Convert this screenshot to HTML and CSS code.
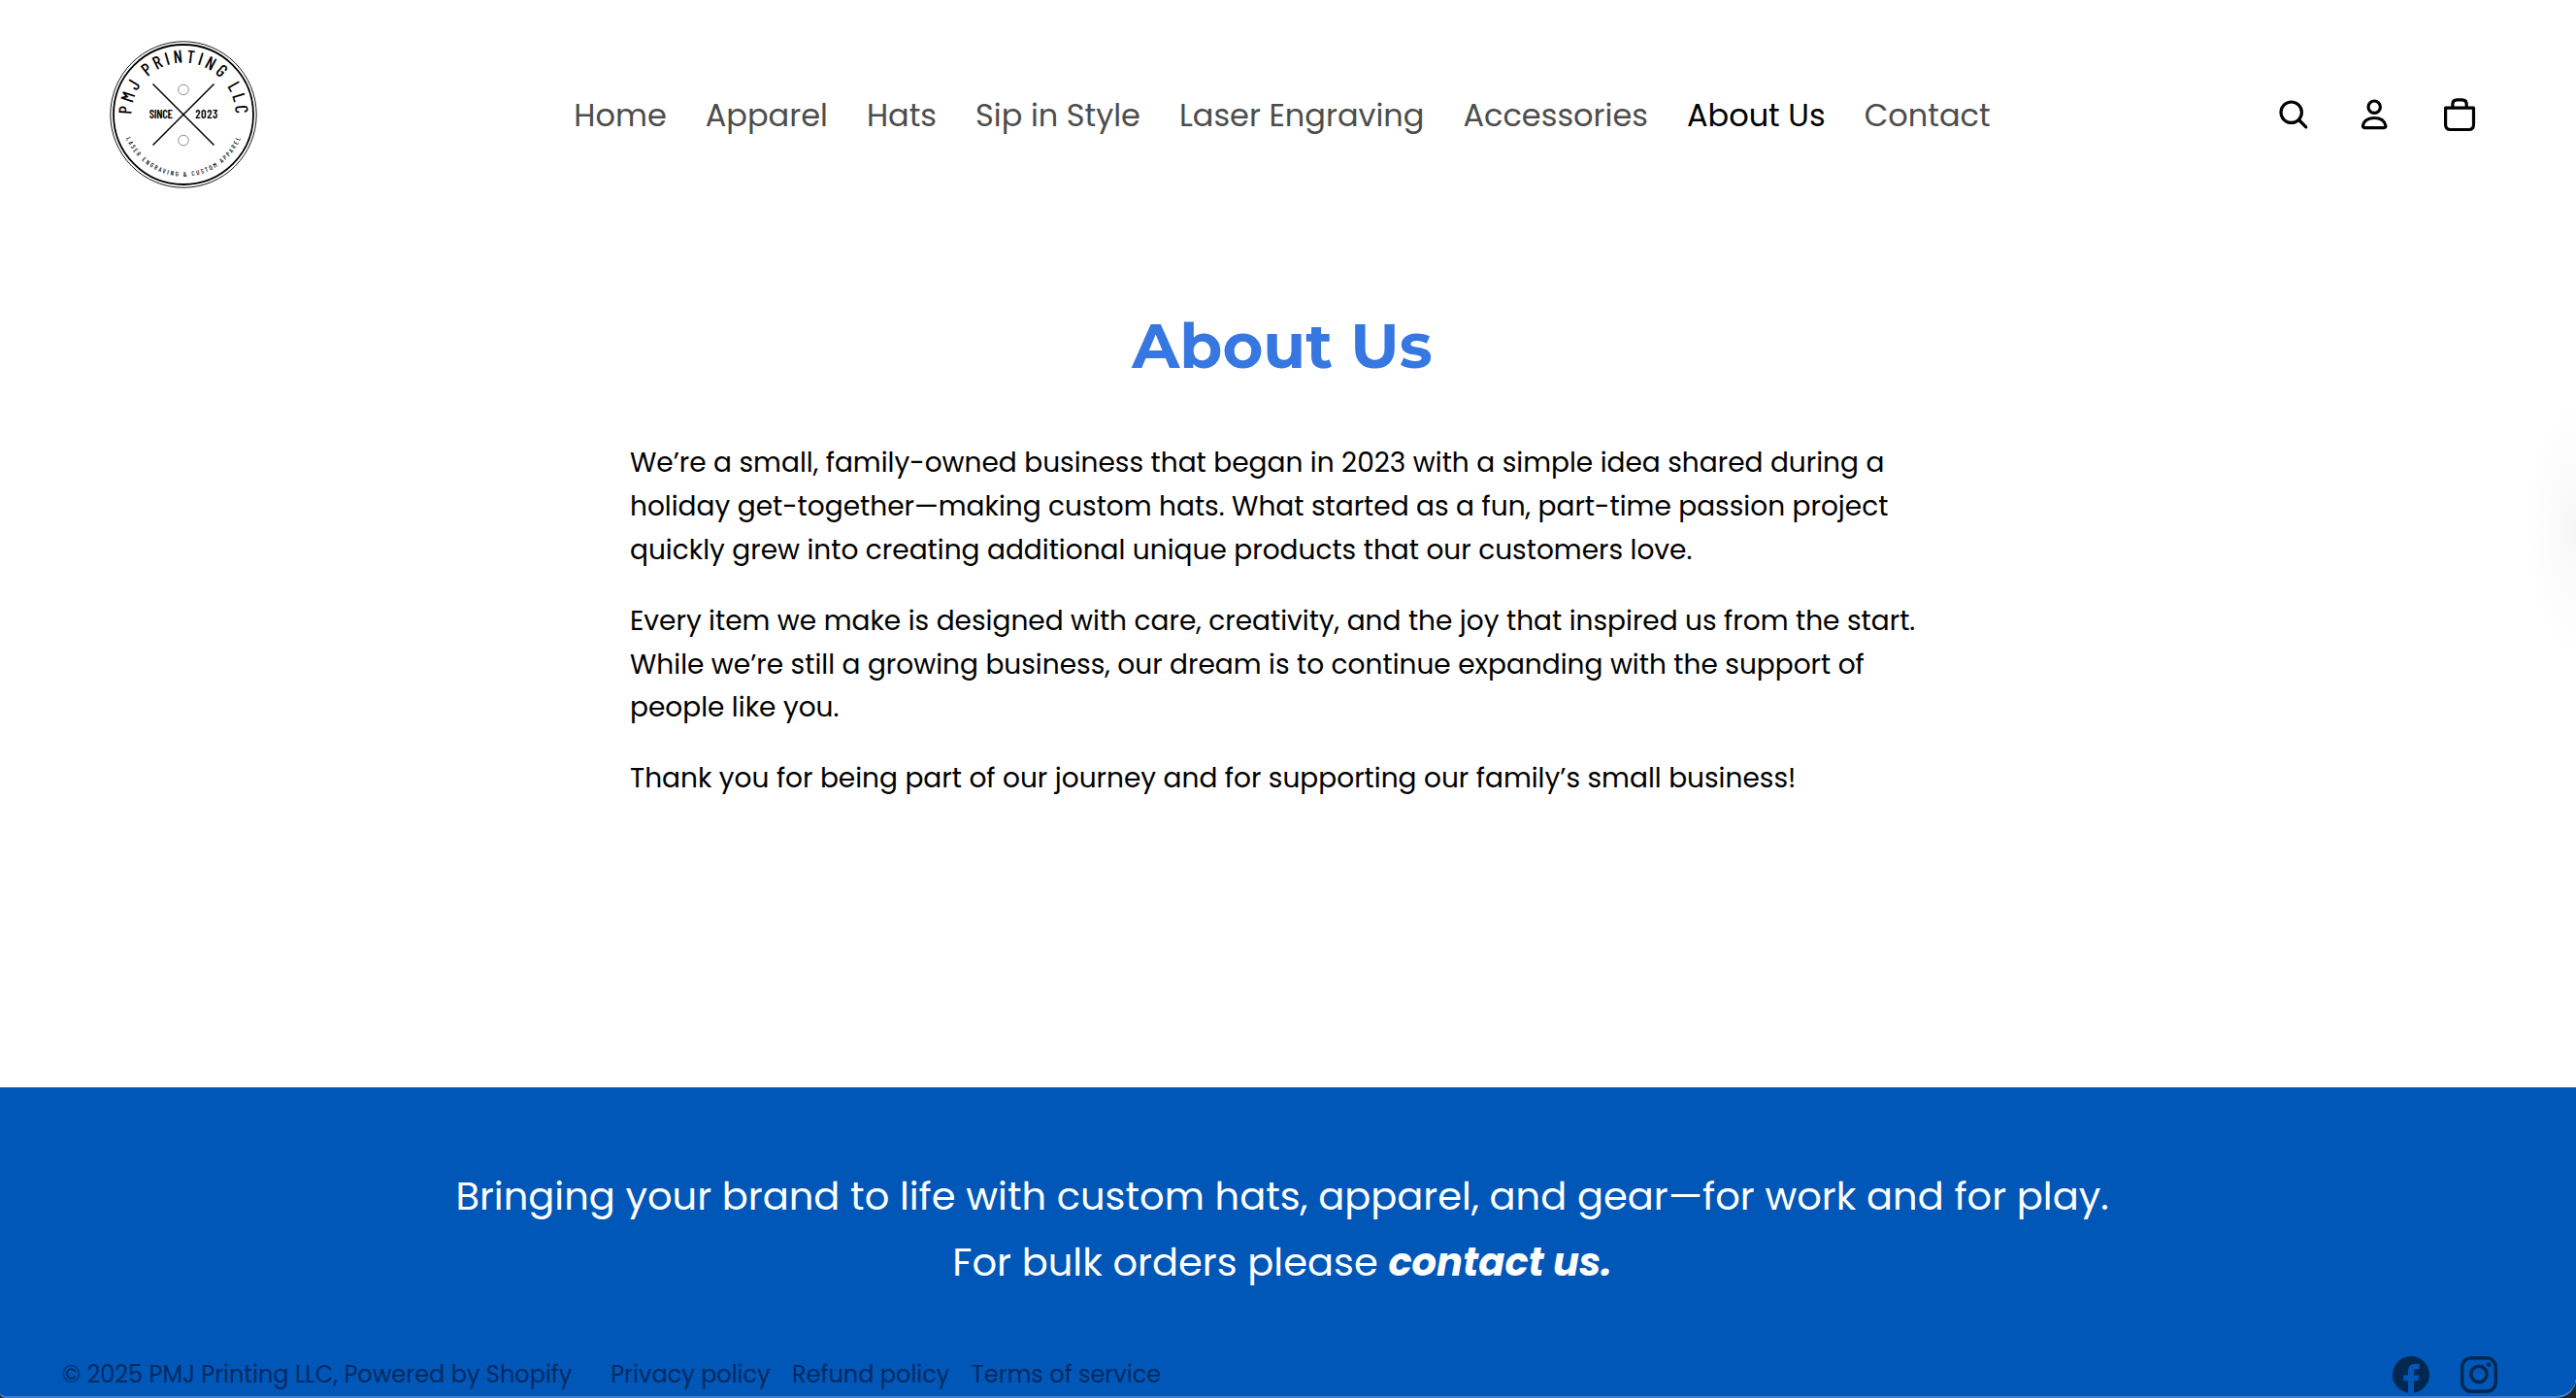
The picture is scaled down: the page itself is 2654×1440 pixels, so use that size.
FILE: index.html
```html
<!DOCTYPE html>
<html lang="en">
<head>
<meta charset="utf-8">
<title>About Us – PMJ Printing LLC</title>
<link rel="stylesheet" href="styles.css">
</head>
<body>
<div class="window">
  <header class="header">
    <a class="logo" aria-label="PMJ Printing LLC">
      <svg width="160" height="160" viewBox="-80 -80 160 160" fill="none" stroke="#000">
        <defs>
          <path id="arc-top" d="M-53.5 0A53.5 53.5 0 0 1 53.5 0"/>
          <path id="arc-bottom" d="M-59 24.500A63.900 63.900 0 0 0 59 24.500"/>
        </defs>
        <circle r="75.2" stroke-width=".9"/>
        <circle r="72" stroke-width="1.8"/>
        <path d="M-31.5-31.5l63 63M31.5-31.5l-63 63" stroke-width="1.5"/>
        <circle cy="-25.6" r="5.3" stroke="#444" stroke-width=".6"/>
        <circle cy="26.6" r="5.3" stroke="#444" stroke-width=".6"/>
        <g class="logo-text">
          <text class="logo-name" textLength="167"><textPath href="#arc-top" textLength="167">PMJ PRINTING LLC</textPath></text>
          <text class="logo-tag" textLength="150"><textPath href="#arc-bottom" textLength="150">LASER ENGRAVING &amp; CUSTOM APPAREL</textPath></text>
          <text class="logo-year" x="-35.2" y="4" textLength="24">SINCE</text>
          <text class="logo-year" x="12.3" y="4" textLength="23">2023</text>
        </g>
      </svg>
    </a>
    <nav class="nav">
      <a>Home</a><a>Apparel</a><a>Hats</a><a>Sip in Style</a><a>Laser Engraving</a><a>Accessories</a><a class="current">About Us</a><a>Contact</a>
    </nav>
    <div class="actions">
      <svg width="48" height="48" viewBox="0 0 48 48"><circle cx="26.7" cy="21.7" r="10.7"/><path d="M34.5 29.5l7.3 7.3"/></svg>
      <svg width="48" height="48" viewBox="0 0 48 48"><circle cx="24.2" cy="16.2" r="6.2"/><path d="M12.5 35.5C13.500 30.500 18 27.500 24.200 27.500S34.800 30.500 35.900 35.500Q36.200 37.600 34.200 37.600H14.200Q12.200 37.600 12.500 35.500Z"/></svg>
      <svg width="48" height="48" viewBox="0 0 48 48"><path d="M9.600 17.100H38.500V34.500Q38.500 39.500 33.500 39.500H14.600Q9.600 39.500 9.600 34.500ZM16.900 16.500V13.500Q16.900 8.800 21.600 8.800H26.500Q31.200 8.800 31.200 13.500V16.500"/></svg>
    </div>
  </header>
  <main class="page">
    <h1>About Us</h1>
    <div class="copy">
      <p>We’re a small, family-owned business that began in 2023 with a simple idea shared during a holiday get-together—making custom hats. What started as a fun, part-time passion project quickly grew into creating additional unique products that our customers love.</p>
      <p>Every item we make is designed with care, creativity, and the joy that inspired us from the start. While we’re still a growing business, our dream is to continue expanding with the support of people like you.</p>
      <p>Thank you for being part of our journey and for supporting our family’s small business!</p>
    </div>
  </main>
  <footer class="footer">
    <p class="slogan">Bringing your brand to life with custom hats, apparel, and gear—for work and for play.<br>For bulk orders please <a class="contact">contact us.</a></p>
    <div class="utilities">
      <span class="copyright">© 2025 PMJ Printing LLC, Powered by Shopify</span>
      <div class="policies"><a>Privacy policy</a><a>Refund policy</a><a>Terms of service</a></div>
      <div class="social">
        <svg width="38" height="38" viewBox="0 0 38 38"><path fill="#02284f" d="M16 37.800V25.200H11.300V19.500H16V15.500C16 10.500 19 7.800 23.500 7.800C25.300 7.800 27.700 8.100 27.700 8.100V13H25.200C22.800 13 22 14.400 22 16V19.500H27.400L26.500 25.200H22V37.800A19 19 0 1 0 16 37.800Z"/></svg>
        <svg width="38" height="38" viewBox="0 0 38 38" fill="none" stroke="#02284f" stroke-width="3.400"><rect x="1.700" y="1.700" width="34.600" height="34.600" rx="9.500"/><circle cx="19" cy="18.500" r="8.200"/><circle cx="29.200" cy="8.700" r="2.300" fill="#02284f" stroke="none"/></svg>
      </div>
    </div>
  </footer>
  <div class="drawer-shadow"></div>
</div>
</body>
</html>
```
FILE: styles.css
```css
* { box-sizing: border-box; }
body {
  margin: 0;
  background: #25241f;
  font-family: Poppins, Inter, "Liberation Sans", sans-serif;
  color: #000;
}
p, h1 { margin: 0; }
.window {
  position: relative;
  display: flex;
  flex-direction: column;
  height: 1440px;
  overflow: hidden;
  background: #fff;
  border-bottom: 2px solid #3f7bcb;
  border-radius: 0 0 20px 5px;
}
.header {
  display: grid;
  grid-template-columns: 1fr auto 1fr;
  align-items: center;
  height: 236px;
  padding: 0 83px;
  margin-right: 12px;
}
.logo { margin-left: 26px; }
.logo svg, .actions svg { display: block; }
.logo-text {
  fill: #000;
  stroke: none;
  font-family: "Barlow Condensed", "Roboto Condensed", "Liberation Sans", sans-serif;
}
.logo-name { font-size: 18.5px; font-weight: 500; }
.logo-tag { font-size: 6.8px; font-weight: 500; }
.logo-year { font-size: 12.4px; font-weight: 600; }
.nav {
  display: flex;
  gap: 40px;
  padding-top: 2px;
  font-size: 32px;
  line-height: 48px;
  color: #4d4d4d;
  white-space: nowrap;
}
.nav .current { color: #000; }
.actions {
  display: flex;
  justify-content: flex-end;
  gap: 40px;
  margin-right: 1px;
}
.actions svg {
  fill: none;
  stroke: #000;
  stroke-width: 3.2;
  stroke-linecap: round;
  stroke-linejoin: round;
}
.page {
  flex: none;
  height: 884px;
  padding-top: 78px;
  margin-right: 12px;
}
h1 {
  font: 700 64px/84px Montserrat, Inter, sans-serif;
  color: #3777e1;
  text-align: center;
}
.copy {
  display: grid;
  gap: 28px;
  width: 1344px;
  margin: 57.4px auto 0;
  font-size: 28px;
  line-height: 44.8px;
}
.footer {
  flex: 1;
  padding: 78px 81px 0 64px;
  background: #0057b8;
}
.slogan {
  margin-right: -5px;
  font-size: 40px;
  line-height: 68px;
  color: #fff;
  text-align: center;
}
.contact { font-weight: 700; font-style: italic; }
.utilities {
  display: flex;
  align-items: center;
  height: 38px;
  margin-top: 63px;
  font-size: 24px;
  line-height: 36px;
  color: #022a60;
}
.copyright, .policies { padding-bottom: 1px; }
.policies { display: flex; gap: 22.5px; margin-left: 40px; }
.social { display: flex; gap: 32px; margin-left: auto; }
.social svg { display: block; }
.drawer-shadow {
  position: absolute;
  top: 405px;
  right: 0;
  width: 56px;
  height: 280px;
  background: radial-gradient(ellipse 100% 50% at 100% 50%, #f6f6f6, #fbfbfb 40%, #fefefe 80%, #fff);
}
```
